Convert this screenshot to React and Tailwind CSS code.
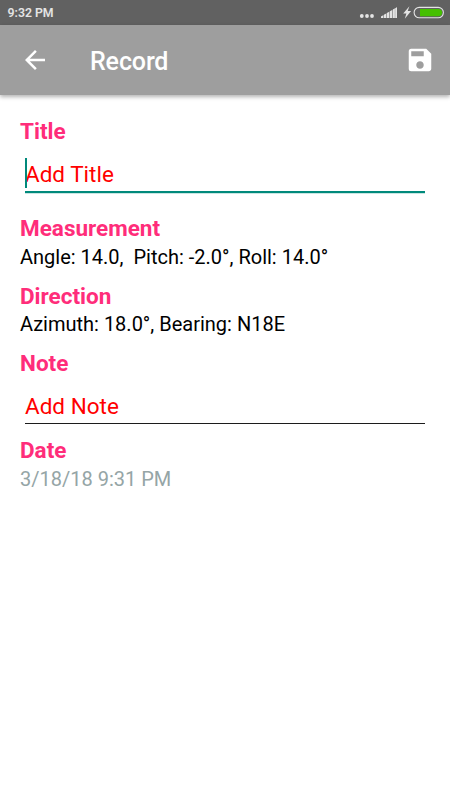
const fields = {
  angle: "14.0",
  pitch: "-2.0°",
  roll: "14.0°",
  azimuth: "18.0°",
  bearing: "N18E",
  date: "3/18/18 9:31 PM",
};

function StatusBar() {
  return (
    <div className="flex h-[25px] items-center justify-between bg-[#616161] pr-[6px] pl-[7.5px] text-[#e4e4e4]">
      <span className="pt-px text-[12.3px] leading-6 font-semibold">9:32 PM</span>
      <svg width="86" height="25" viewBox="358 0 86 25" fill="#e4e4e4" aria-hidden="true">
        <circle cx="361.8" cy="16" r="1.9" />
        <circle cx="367" cy="16" r="1.9" />
        <circle cx="372" cy="16" r="1.9" />
        {/* signal */}
        <path d="M381 18v-1.6L396.9 7.3V18z" opacity=".45" />
        <path d="M381 18v-1.6l2-.8V18zM384 18v-3.2l2-1V18zM387 18v-5l2-1v6zM390 18v-6.8l2-1V18zM393 18v-8.5l1.8-.9V18zM395.3 18V8.2l1.7-.9V18z" />
        {/* charging */}
        <path d="M409.4 6.3 403.2 13.6h3.2l-1.6 5.2 6.3-7.8h-3.4z" />
        <rect x="414.1" y="7.4" width="29.3" height="10.4" rx="5.2" fill="none" stroke="#e4e4e4" strokeWidth="1.1" />
        <path d="M420 8.9h18.4a3.7 3.7 0 0 1 0 7.4H420z" fill="#45c000" />
      </svg>
    </div>
  );
}

function AppBar() {
  return (
    <header className="flex h-[70px] items-center bg-[#9e9e9e] px-[15px] text-white shadow-[0_2px_4px_rgba(0,0,0,0.3)]">
      <button aria-label="Back" className="flex w-[40px] justify-center">
        <svg className="size-[30px]" viewBox="0 0 24 24" fill="currentColor">
          <path d="M20 11H7.83l5.59-5.59L12 4l-8 8 8 8 1.41-1.41L7.83 13H20z" />
        </svg>
      </button>
      <h1 className="ml-[35px] flex-1 pt-[3px] text-[25px] leading-[30px] font-medium tracking-[-0.12px]">
        Record
      </h1>
      <button aria-label="Save">
        <svg className="size-[30px]" viewBox="0 0 24 24" fill="currentColor">
          <path d="M17 3H5a2 2 0 0 0-2 2v14a2 2 0 0 0 2 2h14c1.1 0 2-.9 2-2V7zm-5 16c-1.66 0-3-1.34-3-3s1.34-3 3-3 3 1.34 3 3-1.34 3-3 3zm3-10H5V5h10z" />
        </svg>
      </button>
    </header>
  );
}

function Label({ children }) {
  return <h2 className="text-[22.5px] leading-[26px] font-bold text-[#ff2d7a]">{children}</h2>;
}

export default function App() {
  return (
    <div className="h-[800px] w-[450px] overflow-hidden bg-white font-['Roboto',sans-serif]">
      <StatusBar />
      <AppBar />
      <main className="px-5 pt-[23px]">
        <Label>Title</Label>
        <div className="relative mx-[5px] mt-[17px] h-[32px] border-b-2 border-[#00897b] text-[22.5px] leading-[26px] text-[#ff0000] shadow-[0_1px_0_#c8e6e2]">
          Add Title
          <span className="absolute -top-[3px] left-0 h-[30px] w-[2px] bg-[#00897b]" />
        </div>

        <div className="mt-[22px]">
          <Label>Measurement</Label>
          <p className="mt-1 text-[20px] leading-6 whitespace-pre text-black">
            {`Angle: ${fields.angle},  Pitch: ${fields.pitch}, Roll: ${fields.roll}`}
          </p>
        </div>

        <div className="mt-[14px]">
          <Label>Direction</Label>
          <p className="mt-[3px] text-[20px] leading-6 text-black">
            {`Azimuth: ${fields.azimuth}, Bearing: ${fields.bearing}`}
          </p>
        </div>

        <div className="mt-[14px]">
          <Label>Note</Label>
          <div className="mx-[5px] mt-[17px] h-[31px] border-b border-[#1c1c1c] text-[22.5px] leading-[26px] text-[#ff0000]">
            Add Note
          </div>
        </div>

        <div className="mt-[13px]">
          <Label>Date</Label>
          <p className="mt-1 text-[20px] leading-6 text-[#95a5a6]">{fields.date}</p>
        </div>
      </main>
    </div>
  );
}
